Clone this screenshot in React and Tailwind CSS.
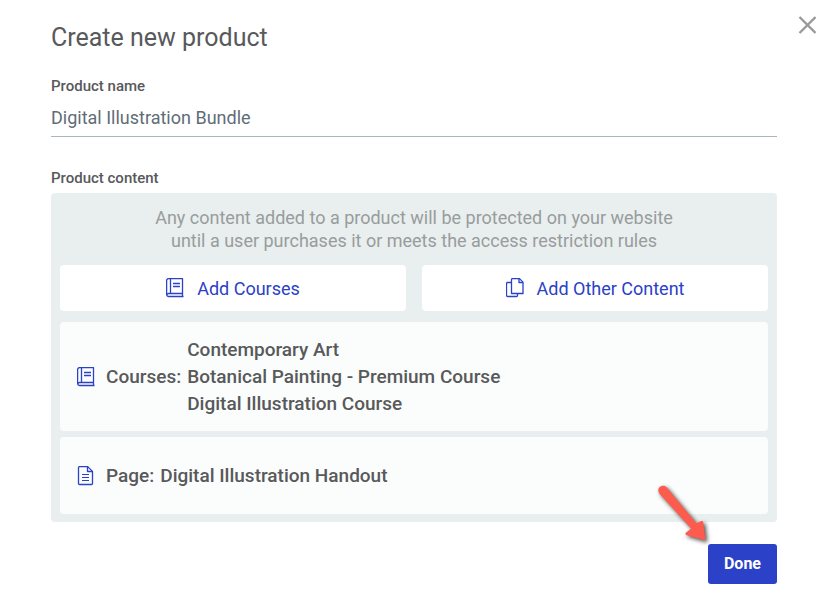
import { useState } from "react";

const items = [
  {
    label: "Courses",
    icon: BookIcon,
    names: [
      "Contemporary Art",
      "Botanical Painting - Premium Course",
      "Digital Illustration Course",
    ],
  },
  { label: "Page", icon: PageIcon, names: ["Digital Illustration Handout"] },
];

function BookIcon() {
  return (
    <svg width="18" height="20" viewBox="0 0 18 20" fill="none" stroke="#2a41c8" strokeWidth="1.3" className="shrink-0">
      <path d="M16.9 .6H2.6A2 2 0 0 0 .6 2.6v14A2 2 0 0 0 2.6 18.5h14.9" />
      <path d="M16.5 .6v14.9H2.6A2 2 0 0 0 .6 17M4.5 .6v14.9M16.5 15.5v3" />
      <path d="M7 5.5h7M7 8.5h7" />
    </svg>
  );
}

function CopyIcon() {
  return (
    <svg width="18" height="20" viewBox="0 0 18 20" fill="none" stroke="#2a41c8" strokeWidth="1.3" strokeLinejoin="round" className="shrink-0">
      <path d="M6.5 .6h7l3.5 3.5v11.4H5.5V1.6a1 1 0 0 1 1-1z" />
      <path d="M13 .8v3.7h3.8" />
      <path d="M5.5 4.5h-4a1 1 0 0 0-1 1v12a1 1 0 0 0 1 1h9a1 1 0 0 0 1-1v-2" />
    </svg>
  );
}

function PageIcon() {
  return (
    <svg width="18" height="20" viewBox="0 0 18 20" fill="none" stroke="#2a41c8" strokeWidth="1.3" strokeLinejoin="round" className="shrink-0">
      <path d="M2.5 .6h8.2l4.8 4.8v12.1a1 1 0 0 1-1 1h-12a1 1 0 0 1-1-1V1.6a1 1 0 0 1 1-1z" />
      <path d="M10.5 .8v4.7h4.8" />
      <path d="M5 8.5h7M5 11.5h7M5 14.5h7" strokeWidth="1.2" />
    </svg>
  );
}

function Arrow() {
  return (
    <svg
      width="60"
      height="66"
      viewBox="0 0 60 66"
      className="pointer-events-none absolute right-full bottom-full -mr-[4px] -mb-[2px] drop-shadow-[2px_2px_2px_rgba(0,0,0,0.7)]"
    >
      <path
        d="M7.5 13.8C5.6 11.2 6 8.4 8 6.8C10.2 5.2 13 5.5 14.8 7.6L44.4 43.2L49.2 41C50.5 40.6 51.2 41.2 51.3 42.4L53.5 60.6L34.8 55.2C33.2 54.6 33 53.2 34.2 52.4L39.2 48.5Z"
        fill="#fd5b4d"
      />
    </svg>
  );
}

export default function App() {
  const [name, setName] = useState("Digital Illustration Bundle");

  return (
    <div className="bg-white font-['Roboto',sans-serif] text-[#58595b]">
      <header className="flex items-start justify-between pt-[14px] pl-[51px]">
        <h1 className="pt-2 text-[25px] leading-8">Create new product</h1>
        <button type="button" aria-label="Close">
          <svg width="18" height="22" viewBox="0 0 18 22" stroke="#9a9a9a" strokeWidth="2.4">
            <path d="M1.5 3l16 16M17.5 3l-16 16" />
          </svg>
        </button>
      </header>

      <main className="pt-[22px] pr-[39px] pb-4 pl-[51px]">
        <label htmlFor="name" className="block text-[15px] leading-5 font-medium">
          Product name
        </label>
        <input
          id="name"
          value={name}
          onChange={(e) => setName(e.target.value)}
          className="mt-1 block h-[37px] w-full border-b border-[#a9b6bd] pb-[2px] text-[18px] text-[#5f6d77] outline-none"
        />

        <h2 className="mt-[31px] text-[15px] leading-5 font-medium">Product content</h2>
        <section className="mt-[5px] rounded-[4px] bg-[#e8efee] px-[9px] pt-[13px] pb-2">
          <p className="text-center text-[18px] leading-[23px] text-[#999c9d]">
            Any content added to a product will be protected on your website
            <br />
            until a user purchases it or meets the access restriction rules
          </p>

          <div className="mt-[13px] grid grid-cols-2 gap-4 text-[18px] text-[#2a41c8]">
            <button type="button" className="flex h-[46px] items-center justify-center gap-[13px] rounded-[4px] bg-white">
              <BookIcon />
              Add Courses
            </button>
            <button type="button" className="flex h-[46px] items-center justify-center gap-[13px] rounded-[4px] bg-white">
              <CopyIcon />
              Add Other Content
            </button>
          </div>

          <ul className="mt-[11px] space-y-[6px] text-[19px] leading-[27px] font-medium">
            {items.map(({ label, icon: Icon, names }) => (
              <li
                key={label}
                className="flex min-h-[77px] items-center rounded-[4px] bg-[#fbfdfc] px-[17px] py-[14px]"
              >
                <Icon />
                <span className="ml-[11px]">{label}:</span>
                <div className="ml-[6px]">
                  {names.map((n) => (
                    <div key={n}>{n}</div>
                  ))}
                </div>
              </li>
            ))}
          </ul>
        </section>

        <div className="mt-[22px] flex justify-end">
          <div className="relative">
            <button type="button" className="block h-10 rounded-[3px] bg-[#2a41c8] px-4 text-[16px] font-bold text-white">
              Done
            </button>
            <Arrow />
          </div>
        </div>
      </main>
    </div>
  );
}
